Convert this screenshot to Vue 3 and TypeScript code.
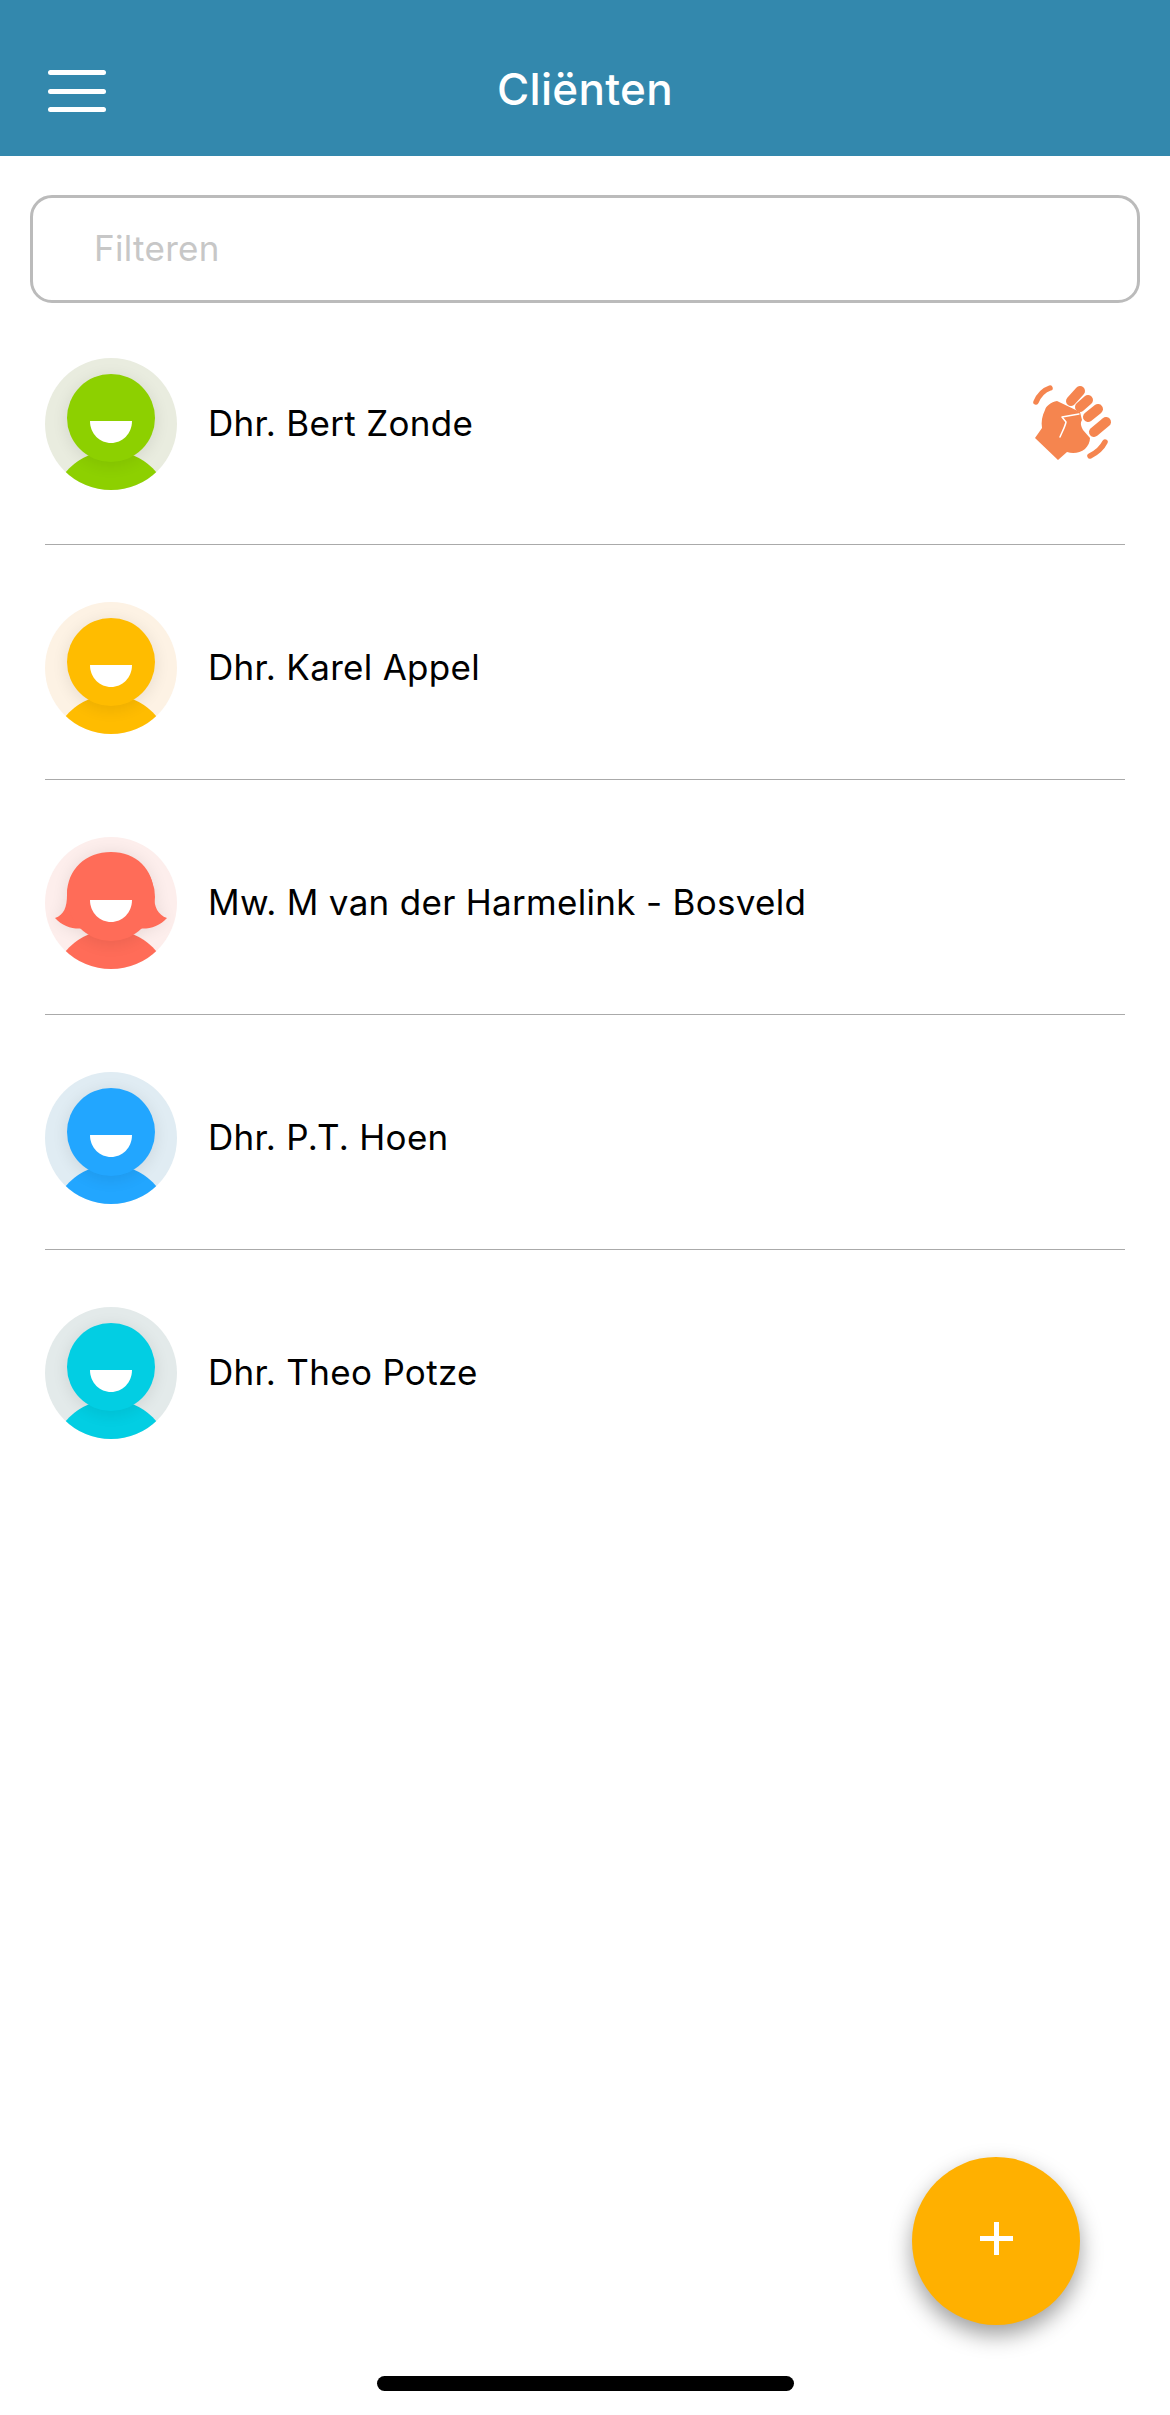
<script setup lang="ts">
interface Client {
  name: string
  color: string
  tint: string
  female?: boolean
  alert?: boolean
}

const clients: Client[] = [
  { name: 'Dhr. Bert Zonde', color: '#8dd000', tint: '#e9ecdf', alert: true },
  { name: 'Dhr. Karel Appel', color: '#ffbc00', tint: '#fdf2e4' },
  { name: 'Mw. M van der Harmelink - Bosveld', color: '#ff6c58', tint: '#fdeeec', female: true },
  { name: 'Dhr. P.T. Hoen', color: '#22a6ff', tint: '#e0ecf3' },
  { name: 'Dhr. Theo Potze', color: '#02cee3', tint: '#e3eaea' }
]

const hair =
  'M22 58C22 32 41 15 66 15C91 15 109 32 109 58C109 70 113 78 122 81C114 90 102 93 92 91L40 91C30 93 18 90 10 81C19 78 22 70 22 58Z'
</script>

<template>
  <div class="page">
    <header class="topbar">
      <button class="menu-btn" aria-label="Menu">
        <span></span>
        <span></span>
        <span></span>
      </button>
      <h1 class="title">Cliënten</h1>
    </header>

    <div class="filter">
      <input class="filter-input" type="text" placeholder="Filteren" />
    </div>

    <ul class="clients">
      <li v-for="client in clients" :key="client.name" class="client">
        <svg class="avatar" viewBox="0 0 132 132" :style="{ background: client.tint }">
          <circle cx="66" cy="152" r="59" :fill="client.color" />
          <g class="shade">
            <path v-if="client.female" :d="hair" />
            <circle cx="66" cy="63" r="45" />
          </g>
          <path v-if="client.female" :d="hair" :fill="client.color" />
          <circle cx="66" cy="60" r="44" :fill="client.color" />
          <path d="M45 63H87C87 76 77 85 66 85C55 85 45 76 45 63Z" fill="#fff" />
        </svg>
        <span class="name">{{ client.name }}</span>
        <svg v-if="client.alert" class="fist" viewBox="0 0 90 90">
          <g fill="none" stroke="#f5854f" stroke-linecap="round">
            <path d="M11 23C14 16 19 11 25 9" stroke-width="5.5" />
            <path d="M65 77C71 74 77 69 80 63" stroke-width="5.5" />
            <path d="M46 22L55 12" stroke-width="10" />
            <path d="M55 28L63 21" stroke-width="10" />
            <path d="M63 38L73 30" stroke-width="10" />
            <path d="M69 53L81 43" stroke-width="10" />
          </g>
          <path
            fill="#f5854f"
            d="M10 59L33 81L42 73C48 75 55 74 60 70C63 67 65 63 65 59L58 51C56 47 55 44 57 41L55 33L32 22C26 23 21 27 20 31C17 37 16 43 17 49Z"
          />
          <path
            fill="none"
            stroke="#fff"
            stroke-width="1.5"
            stroke-linecap="round"
            stroke-linejoin="round"
            d="M35 58C37 53 40 48 41 43L37 38L54 35"
          />
        </svg>
      </li>
    </ul>

    <button class="add-btn" aria-label="Toevoegen"><span class="plus"></span></button>
    <div class="home-bar"></div>
  </div>
</template>

<style scoped>
.page {
  position: relative;
  width: 1170px;
  height: 2415px;
  overflow: hidden;
  background: #fff;
  font-family: Inter, 'Liberation Sans', sans-serif;
  color: #000;
}

.topbar {
  display: flex;
  align-items: center;
  justify-content: center;
  position: relative;
  height: 156px;
  padding-top: 22px;
  box-sizing: border-box;
  background: #3388ad;
}
.title {
  margin: 0;
  font-size: 44px;
  font-weight: 500;
  letter-spacing: 0.3px;
  color: #fff;
}
.menu-btn {
  position: absolute;
  left: 48px;
  top: 70px;
  display: flex;
  flex-direction: column;
  justify-content: space-between;
  width: 58px;
  height: 42px;
  padding: 0;
  border: 0;
  background: none;
}
.menu-btn span {
  display: block;
  height: 5px;
  border-radius: 3px;
  background: #fff;
}

.filter {
  padding: 39px 30px 0;
}
.filter-input {
  display: block;
  width: 100%;
  height: 108px;
  box-sizing: border-box;
  padding: 0 61px 2px;
  border: 3px solid #bbb;
  border-radius: 22px;
  outline: none;
  font-family: inherit;
  font-size: 35px;
  letter-spacing: 0.3px;
}
.filter-input::placeholder {
  color: #c7c7c7;
  opacity: 1;
}

.clients {
  margin: 0 45px;
  padding: 0;
  list-style: none;
}
.client {
  display: flex;
  align-items: center;
  padding: 57px 0 45px;
  border-bottom: 1px solid #aaa;
}
.client:first-child {
  padding: 55px 0 54px;
}
.client:last-child {
  border-bottom: 0;
}
.avatar {
  display: block;
  flex: none;
  width: 132px;
  height: 132px;
  border-radius: 50%;
}
.shade {
  filter: blur(8px);
  opacity: 0.08;
}
.name {
  margin-left: 31px;
  margin-bottom: 2px;
  font-size: 35px;
  letter-spacing: 0.3px;
}
.fist {
  flex: none;
  width: 90px;
  height: 90px;
  margin-left: auto;
  margin-right: 10px;
}

.add-btn {
  position: absolute;
  left: 912px;
  top: 2157px;
  display: flex;
  align-items: center;
  justify-content: center;
  width: 168px;
  height: 168px;
  padding: 0 0 6px;
  border: 0;
  border-radius: 50%;
  background: #ffb000;
  box-shadow: 0 10px 22px rgba(0, 0, 0, 0.38);
}
.plus {
  position: relative;
  display: block;
  width: 33px;
  height: 5px;
  background: #fff;
}
.plus::after {
  content: '';
  position: absolute;
  left: 14px;
  top: -14px;
  width: 5px;
  height: 33px;
  background: #fff;
}

.home-bar {
  position: absolute;
  left: 377px;
  top: 2376px;
  width: 417px;
  height: 15px;
  border-radius: 8px;
  background: #000;
}
</style>

<style>
body {
  margin: 0;
}
</style>
